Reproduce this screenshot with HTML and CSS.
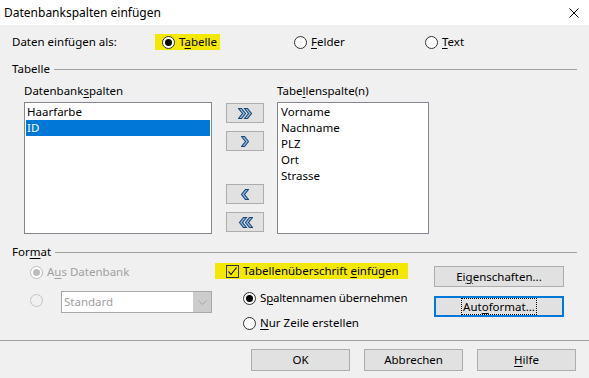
FILE: index.html
```html
<!DOCTYPE html>
<html lang="de">
<head>
<meta charset="utf-8">
<title>Datenbankspalten einfügen</title>
<link rel="stylesheet" href="styles.css">
</head>
<body>
<div class="window">
  <div class="titlebar">
    <span class="title">Datenbankspalten einfügen</span>
    <svg class="close" width="10" height="10" viewBox="0 0 10 10"><path d="M0.5 0.5 L9.5 9.5 M9.5 0.5 L0.5 9.5" stroke="#000" stroke-width="1" fill="none"/></svg>
  </div>
  <div class="content">
    <div class="insert-row">
      <span class="lbl">Daten einfügen als:</span>
      <label class="opt hl"><span class="radio on"></span><span>T<u>a</u>belle</span></label>
      <label class="opt"><span class="radio"></span><span><u>F</u>elder</span></label>
      <label class="opt"><span class="radio"></span><span><u>T</u>ext</span></label>
    </div>

    <div class="group-head"><span>Tabelle</span><span class="rule"></span></div>

    <div class="columns">
      <div class="col-left">
        <div class="cap">Datenbank<u>s</u>palten</div>
        <div class="listbox">
          <div class="item">Haarfarbe</div>
          <div class="item sel">ID</div>
        </div>
      </div>
      <div class="movers">
        <button class="mv"><svg width="15" height="11" viewBox="0 0 15 11"><path class="chev" d="M0.5 0.5 H3.5 L7.5 5.5 L3.5 10.5 H0.5 L4.5 5.5 Z"/><path class="chev" d="M6.5 0.5 H9.5 L13.5 5.5 L9.5 10.5 H6.5 L10.5 5.5 Z"/></svg></button>
        <button class="mv"><svg width="8" height="11" viewBox="0 0 8 11"><path class="chev" d="M0.5 0.5 H3.5 L7.5 5.5 L3.5 10.5 H0.5 L4.5 5.5 Z"/></svg></button>
        <button class="mv mv-gap"><svg width="8" height="11" viewBox="0 0 8 11"><path class="chev" d="M7.5 0.5 H4.5 L0.5 5.5 L4.5 10.5 H7.5 L3.5 5.5 Z"/></svg></button>
        <button class="mv"><svg width="15" height="11" viewBox="0 0 15 11"><path class="chev" d="M14.5 0.5 H11.5 L7.5 5.5 L11.5 10.5 H14.5 L10.5 5.5 Z"/><path class="chev" d="M8.5 0.5 H5.5 L1.5 5.5 L5.5 10.5 H8.5 L4.5 5.5 Z"/></svg></button>
      </div>
      <div class="col-right">
        <div class="cap">Tabe<u>l</u>lenspalte(n)</div>
        <div class="listbox right">
          <div class="item">Vorname</div>
          <div class="item">Nachname</div>
          <div class="item">PLZ</div>
          <div class="item">Ort</div>
          <div class="item">Strasse</div>
        </div>
      </div>
    </div>

    <div class="group-head fmt"><span>For<u>m</u>at</span><span class="rule"></span></div>

    <div class="format">
      <div class="f-left">
        <label class="opt dis"><span class="radio on"></span><span>A<u>u</u>s Datenbank</span></label>
        <div class="combo-row">
          <span class="radio dis-r"></span>
          <div class="combo">
            <span class="combo-text">Standard</span>
            <span class="combo-btn"><svg width="9" height="5" viewBox="0 0 9 5"><path d="M0.5 0.5 L4.5 4.5 L8.5 0.5" stroke="#a8a8a8" stroke-width="1" fill="none"/></svg></span>
          </div>
        </div>
      </div>
      <div class="f-mid">
        <label class="opt hl chk-row"><span class="check"><svg width="11" height="11" viewBox="0 0 11 11"><path d="M1.5 5.5 L4 8.5 L9.5 1.5" stroke="#000" stroke-width="1.1" fill="none"/></svg></span><span>Tabellenüberschrift <u>e</u>infügen</span></label>
        <label class="opt sub r1"><span class="radio on"></span><span class="narrow">S<u>p</u>altennamen übernehmen</span></label>
        <label class="opt sub r2"><span class="radio"></span><span><u>N</u>ur Zeile erstellen</span></label>
      </div>
      <div class="f-right">
        <button class="btn">Ei<u>g</u>enschaften...</button>
        <button class="btn focus"><span class="focus-box">Aut<u>o</u>format...</span></button>
      </div>
    </div>
  </div>
  <div class="sep"></div>
  <div class="actions">
    <button class="btn big">OK</button>
    <button class="btn big">Abbrechen</button>
    <button class="btn big"><u>H</u>ilfe</button>
  </div>
</div>
</body>
</html>
```

FILE: styles.css
```css
* { box-sizing: border-box; }
html, body { margin: 0; padding: 0; }
body {
  width: 589px;
  height: 378px;
  overflow: hidden;
  background: #f0f0f0;
  font-family: "Noto Sans", "Open Sans", sans-serif;
  font-size: 11.5px;
  line-height: 16px;
  color: #000;
}
u { text-decoration: underline; text-underline-offset: 2px; text-decoration-thickness: 1px; }
.window { width: 589px; height: 378px; display: flex; flex-direction: column; }

.titlebar {
  height: 25px;
  background: #fff;
  display: flex;
  align-items: center;
  justify-content: space-between;
  padding: 0 10px 0 4px;
}
.title { font-size: 12px; }
.close { display: block; }

.content { padding: 9px 12px 0 12px; }

.insert-row {
  display: grid;
  grid-template-columns: 143px 139px 131px auto;
  height: 16px;
  align-items: center;
}
.opt { display: flex; align-items: center; gap: 4px; height: 16px; white-space: nowrap; }
.insert-row .hl { width: 65px; padding-left: 7px; }
.hl { background: #f2e800; }

.radio {
  width: 13px; height: 13px;
  border: 1px solid #333;
  border-radius: 50%;
  background: #fff;
  display: inline-flex;
  align-items: center;
  justify-content: center;
  flex: none;
}
.radio.on::after {
  content: "";
  width: 7px; height: 7px;
  border-radius: 50%;
  background: #000;
}

.group-head {
  display: flex;
  align-items: center;
  gap: 4px;
  height: 16px;
  margin-top: 11px;
}
.group-head .rule { flex: 1; height: 1px; background: #a0a0a0; }
.group-head.fmt { margin-top: 10px; }

.columns { display: flex; margin-top: 6px; padding-left: 12px; }
.cap { height: 16px; margin-bottom: 3px; white-space: nowrap; }
.col-left { width: 188px; }
.col-right { width: 152px; }
.listbox {
  height: 132px;
  background: #fff;
  border: 1px solid #828790;
  padding: 1px 1px;
}
.listbox .item { height: 16px; padding-left: 1px; }
.listbox.right .item { padding-left: 2px; }
.item.sel { background: #0078d7; color: #fff; }

.movers {
  width: 38px;
  margin: 0 13px 0 14px;
  padding-top: 20px;
  display: flex;
  flex-direction: column;
  gap: 8px;
}
.mv {
  width: 38px; height: 20px;
  background: #e1e1e1;
  border: 1px solid #adadad;
  padding: 0;
  display: flex;
  align-items: center;
  justify-content: center;
}
.mv svg { display: block; }
.mv-gap { margin-top: 25px; }
.chev { fill: #8fb9e0; stroke: #1a4675; stroke-width: 1.1; stroke-linejoin: miter; }

.format { display: flex; }
.f-left { width: 203px; padding-left: 18px; }
.f-mid { width: 219px; }
.f-right { width: 130px; display: flex; flex-direction: column; gap: 9px; padding-top: 6px; }

.f-left .opt { margin-top: 4px; }
.opt.dis { color: #a0a0a0; }
.opt.dis .radio { border-color: #bcbcbc; }
.opt.dis .radio.on::after { background: #bcbcbc; }
.combo-row { display: flex; align-items: center; margin-top: 11px; gap: 18px; }
.radio.dis-r { border-color: #c4c4c4; background: #f0f0f0; margin-top: -3px; }
.combo {
  width: 151px; height: 22px;
  background: #fff;
  border: 1px solid #a8a8a8;
  display: flex;
  align-items: center;
  justify-content: space-between;
  padding: 0 0 0 2px;
  color: #a0a0a0;
}
.combo-btn {
  width: 18px; height: 20px;
  background: #cccccc;
  display: flex;
  align-items: center;
  justify-content: center;
}
.combo-btn svg { display: block; }

.chk-row { margin-top: 3px; width: 193px; padding-left: 11px; gap: 4px; }
.check {
  width: 13px; height: 13px;
  border: 1px solid #333;
  background: transparent;
  display: flex;
  align-items: center;
  justify-content: center;
  flex: none;
}
.check svg { display: block; }
.opt.sub { margin-left: 28px; }
.opt.r1 { margin-top: 11px; }
.opt.r2 { margin-top: 9px; }
.narrow { letter-spacing: -0.2px; }

.btn {
  font: inherit;
  color: #000;
  background: #e1e1e1;
  border: 1px solid #adadad;
  height: 21px;
  width: 130px;
  padding: 0;
  display: flex;
  align-items: center;
  justify-content: center;
}
.btn.focus { border: 2px solid #0078d7; }
.focus-box { outline: 1px dotted #000; padding: 0 1px; line-height: 15px; }

.sep { height: 1px; background: #a0a0a0; margin-top: 9px; }
.actions { display: flex; justify-content: flex-end; gap: 14px; padding: 8px 13px 0 0; }
.btn.big { width: 99px; height: 22px; }
```
